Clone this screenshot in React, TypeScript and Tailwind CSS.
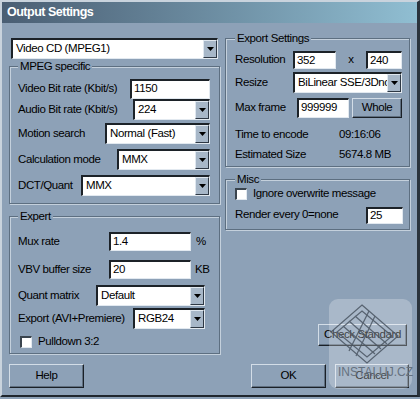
import type { ReactNode } from 'react';

// Win9x-style "Output Settings" dialog

const FONT = "font-['Liberation_Sans',Arial,sans-serif] text-[11.5px] tracking-[-0.4px] text-black";

function Arrow() {
  return (
    <div className="flex h-full w-[14px] shrink-0 items-center justify-center border border-t-[#dfe7ef] border-l-[#dfe7ef] border-b-[#2e3844] border-r-[#2e3844] bg-[#a7b7c8]">
      <svg width="7" height="4" viewBox="0 0 7 4">
        <path d="M0 0h7L3.5 4z" fill="#000" />
      </svg>
    </div>
  );
}

function Field({ value, className = '' }: { value: string; className?: string }) {
  return (
    <div
      className={`flex items-center bg-white pl-[2px] border-t-2 border-l-2 border-b border-r border-t-[#1c2228] border-l-[#1c2228] border-b-[#e2e9f0] border-r-[#e2e9f0] ${className}`}
    >
      {value}
    </div>
  );
}

function Select({ value, className = '' }: { value: string; className?: string }) {
  return (
    <div
      className={`flex h-[21px] items-stretch bg-white border-t-2 border-l-2 border-b border-r border-t-[#1c2228] border-l-[#1c2228] border-b-[#e2e9f0] border-r-[#e2e9f0] ${className}`}
    >
      <span className="flex flex-1 items-center overflow-hidden whitespace-nowrap pl-[3px]">{value}</span>
      <Arrow />
    </div>
  );
}

function Button({ children, className = '' }: { children: ReactNode; className?: string }) {
  return (
    <div
      className={`flex items-center justify-center border border-t-[#d3dde7] border-l-[#d3dde7] border-b-[#1a2027] border-r-[#1a2027] shadow-[inset_-1px_-1px_0_#5f6f80] ${className}`}
    >
      {children}
    </div>
  );
}

function Check() {
  return (
    <div className="h-[12px] w-[12px] shrink-0 bg-white border-t-2 border-l-2 border-b border-r border-t-[#3a444e] border-l-[#3a444e] border-b-[#e2e9f0] border-r-[#e2e9f0]" />
  );
}

function Group({ title, children, className = '' }: { title: string; children: ReactNode; className?: string }) {
  return (
    <fieldset
      className={`min-w-0 border border-[#5d6f81] shadow-[inset_1px_1px_0_#c4d0dc,1px_1px_0_#c4d0dc] ${className}`}
    >
      <legend className="bg-[#8da1b7] px-[2px] leading-[14px]">{title}</legend>
      {children}
    </fieldset>
  );
}

function Watermark() {
  return (
    <div className="absolute left-[329px] top-[299px] h-[90px] w-[83px] rounded-[9px] bg-white/25">
      <svg width="83" height="90" viewBox="0 0 83 90" className="absolute left-0 top-0">
        <g fill="none" stroke="#4a5562" strokeWidth="1.2" opacity="0.85">
          <path d="M33 6 L69 37 L38 64 L2 33 Z" />
          <path d="M33 12 L63 37 L38 58 L8 33 Z" />
          <path d="M20 22 L52 50" />
          <path d="M26 17 L58 45" />
          <path d="M14 27 L46 55" />
          <path d="M40 12 L20 52" />
          <path d="M46 17 L27 57" />
        </g>
      </svg>
      <span className="absolute left-[9px] top-[64px] text-[12px] tracking-[0px] text-[#65717f]">INSTALUJ.CZ</span>
    </div>
  );
}

export default function App() {
  return (
    <div className={`relative h-[399px] w-[420px] bg-[#8da1b7] ${FONT}`}>
      <div className="flex h-[397px] flex-col border-t-2 border-l-2 border-b-2 border-r-[3px] border-t-[#c9d3dd] border-l-[#c9d3dd] border-b-[#1f262d] border-r-[#2a333c]">
        {/* title bar */}
        <div className="flex h-[21px] items-center bg-linear-to-r from-[#4a5e73] to-[#90bed2] pl-[5px] text-[12.5px] font-bold tracking-[-0.5px] text-white">
          Output Settings
        </div>

        <div className="flex flex-1 flex-col pl-[7px]">
          <div className="flex gap-[5px]">
            {/* left column */}
            <div className="flex w-[211px] flex-col">
              <Select value="Video CD (MPEG1)" className="ml-[2px] mt-[15px] w-[207px]" />

              <Group title="MPEG specific" className="pl-[8px] pr-[9px] pb-[7px]">
                <div className="mt-[5px] flex h-[21px] items-center justify-between">
                  <span>Video Bit rate (Kbit/s)</span>
                  <Field value="1150" className="h-[20px] w-[80px]" />
                </div>
                <div className="flex h-[21px] items-center justify-between">
                  <span>Audio Bit rate (Kbit/s)</span>
                  <Select value="224" className="w-[77px]" />
                </div>
                <div className="mt-[3px] flex h-[21px] items-center justify-between">
                  <span>Motion search</span>
                  <Select value="Normal (Fast)" className="w-[105px]" />
                </div>
                <div className="mt-[5px] flex h-[21px] items-center justify-between">
                  <span>Calculation mode</span>
                  <Select value="MMX" className="w-[93px]" />
                </div>
                <div className="mt-[5px] flex h-[21px] items-center justify-between">
                  <span>DCT/Quant</span>
                  <Select value="MMX" className="w-[129px]" />
                </div>
              </Group>

              <Group title="Expert" className="mt-[5px] pl-[8px] pr-[14px] pb-[5px]">
                <div className="mt-[8px] flex h-[21px] items-center">
                  <span className="w-[91px] shrink-0">Mux rate</span>
                  <Field value="1.4" className="h-[19px] w-[82px] shrink-0" />
                  <span className="ml-[5px]">%</span>
                </div>
                <div className="mt-[7px] flex h-[21px] items-center">
                  <span className="w-[91px] shrink-0">VBV buffer size</span>
                  <Field value="20" className="h-[19px] w-[82px] shrink-0" />
                  <span className="ml-[4px] whitespace-nowrap">KB</span>
                </div>
                <div className="mt-[5px] flex h-[21px] items-center justify-between">
                  <span>Quant matrix</span>
                  <Select value="Default" className="w-[109px]" />
                </div>
                <div className="mt-[2px] flex h-[21px] items-center justify-between">
                  <span>Export (AVI+Premiere)</span>
                  <Select value="RGB24" className="w-[72px]" />
                </div>
                <div className="mt-[6px] flex h-[13px] items-center gap-[6px] pl-[2px]">
                  <Check />
                  <span>Pulldown 3:2</span>
                </div>
              </Group>
            </div>

            {/* right column */}
            <div className="flex w-[185px] flex-col">
              <Group title="Export Settings" className="mt-[8px] pl-[9px] pr-[7px] pb-[3px]">
                <div className="mt-[5px] flex h-[20px] items-center">
                  <span className="w-[58px]">Resolution</span>
                  <Field value="352" className="h-[18px] w-[43px]" />
                  <span className="w-[30px] text-center">x</span>
                  <Field value="240" className="h-[18px] w-[36px]" />
                </div>
                <div className="mt-[2px] flex h-[21px] items-center">
                  <span className="w-[58px]">Resize</span>
                  <Select value="BiLinear SSE/3Dnow" className="h-[20px] w-[109px]" />
                </div>
                <div className="mt-[4px] flex h-[21px] items-center">
                  <span className="w-[62px]">Max frame</span>
                  <Field value="999999" className="h-[20px] w-[52px]" />
                  <Button className="ml-[3px] h-[20px] w-[50px]">Whole</Button>
                </div>
                <div className="mt-[9px] flex h-[16px] items-center">
                  <span className="w-[104px]">Time to encode</span>
                  <span>09:16:06</span>
                </div>
                <div className="mt-[4px] flex h-[16px] items-center">
                  <span className="w-[104px]">Estimated Size</span>
                  <span>5674.8 MB</span>
                </div>
              </Group>

              <Group title="Misc" className="mt-[5px] pl-[9px] pr-[6px] pb-[4px]">
                <div className="mt-[1px] flex h-[13px] items-center gap-[6px]">
                  <Check />
                  <span>Ignore overwrite message</span>
                </div>
                <div className="mt-[5px] flex h-[20px] items-center justify-between">
                  <span>Render every 0=none</span>
                  <Field value="25" className="h-[17px] w-[37px]" />
                </div>
              </Group>

              <Button className="mb-[8px] ml-auto mr-[3px] mt-auto h-[22px] w-[89px]">Check Standard</Button>
            </div>
          </div>

          {/* bottom buttons */}
          <div className="mt-[10px] flex pr-[8px]">
            <Button className="h-[24px] w-[75px]">Help</Button>
            <Button className="ml-auto h-[24px] w-[75px]">OK</Button>
            <Button className="ml-[9px] h-[24px] w-[74px]">Cancel</Button>
          </div>
        </div>
      </div>
      <Watermark />
    </div>
  );
}
